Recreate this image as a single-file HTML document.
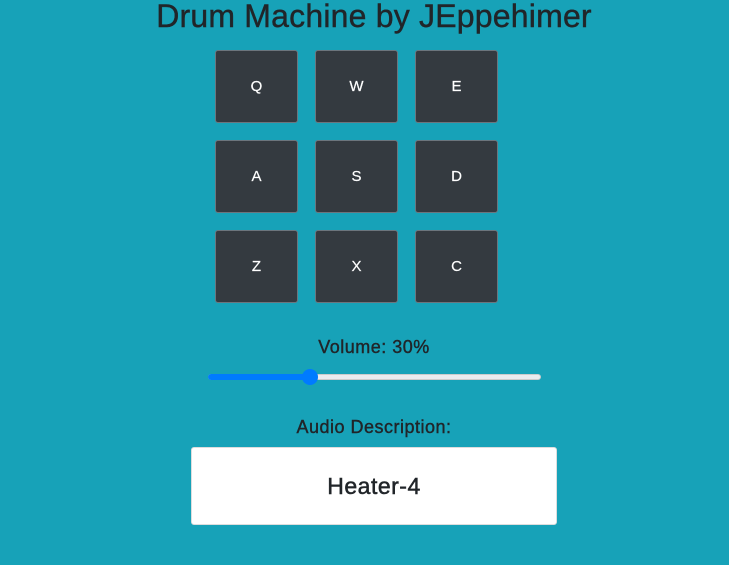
<!DOCTYPE html>
<html><head><style>
body{margin:0;width:729px;height:565px;background:#17a2b8;font-family:"Liberation Sans",sans-serif;color:#212529;position:relative;overflow:hidden}
h1{position:absolute;top:-1px;left:0;width:748px;text-align:center;margin:0;font-size:32px;font-weight:normal;line-height:34px;letter-spacing:0.2px;-webkit-text-stroke:0.4px #212529}
.p{position:absolute;width:83px;height:73px;background:#343a40;border:1px solid #6c757d;border-radius:3px;color:#fff;font-size:15px;display:flex;align-items:center;justify-content:center;box-sizing:border-box;-webkit-text-stroke:0.2px #fff}
.t{position:absolute;left:0;width:748px;text-align:center;font-size:18px;letter-spacing:0.5px;-webkit-text-stroke:0.4px #212529}
</style></head><body>
<h1>Drum Machine by JEppehimer</h1>
<div class="p" style="left:215px;top:50px">Q</div>
<div class="p" style="left:315px;top:50px">W</div>
<div class="p" style="left:415px;top:50px">E</div>
<div class="p" style="left:215px;top:140px">A</div>
<div class="p" style="left:315px;top:140px">S</div>
<div class="p" style="left:415px;top:140px">D</div>
<div class="p" style="left:215px;top:230px">Z</div>
<div class="p" style="left:315px;top:230px">X</div>
<div class="p" style="left:415px;top:230px">C</div>
<div class="t" style="top:337px">Volume: 30%</div>
<div style="position:absolute;left:208px;top:374px;width:333px;height:6px;border-radius:3px;background:#e9ecef;border:1px solid #ccc;box-sizing:border-box"></div>
<div style="position:absolute;left:208px;top:374px;width:102px;height:6px;border-radius:3px;background:#007bff"></div>
<div style="position:absolute;left:302px;top:369px;width:16px;height:16px;border-radius:50%;background:#007bff"></div>
<div class="t" style="top:417px">Audio Description:</div>
<div style="position:absolute;left:191px;top:447px;width:366px;height:78px;background:#fff;border:1px solid #ddd;border-radius:3px;box-sizing:border-box;display:flex;align-items:center;justify-content:center;font-size:23px;letter-spacing:0.5px;-webkit-text-stroke:0.5px #212529">Heater-4</div>
</body></html>
